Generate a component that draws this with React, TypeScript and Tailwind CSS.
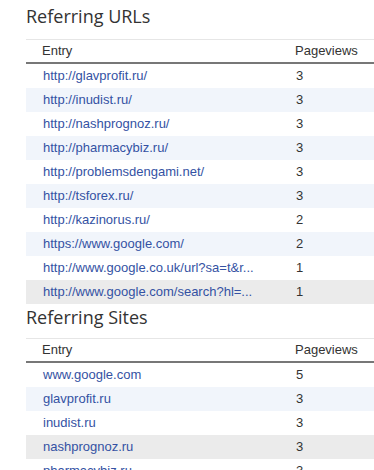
import React from 'react';

type Row = { entry: string; views: number; shade?: 'blue' | 'gray' };

const urls: Row[] = [
  { entry: 'http://glavprofit.ru/', views: 3 },
  { entry: 'http://inudist.ru/', views: 3, shade: 'blue' },
  { entry: 'http://nashprognoz.ru/', views: 3 },
  { entry: 'http://pharmacybiz.ru/', views: 3, shade: 'blue' },
  { entry: 'http://problemsdengami.net/', views: 3 },
  { entry: 'http://tsforex.ru/', views: 3, shade: 'blue' },
  { entry: 'http://kazinorus.ru/', views: 2 },
  { entry: 'https://www.google.com/', views: 2, shade: 'blue' },
  { entry: 'http://www.google.co.uk/url?sa=t&r...', views: 1 },
  { entry: 'http://www.google.com/search?hl=...', views: 1, shade: 'gray' },
];

const sites: Row[] = [
  { entry: 'www.google.com', views: 5 },
  { entry: 'glavprofit.ru', views: 3, shade: 'blue' },
  { entry: 'inudist.ru', views: 3 },
  { entry: 'nashprognoz.ru', views: 3, shade: 'gray' },
  { entry: 'pharmacybiz.ru', views: 3 },
];

const StatsTable: React.FC<{ rows: Row[] }> = ({ rows }) => (
  <div className="ml-[26px] border-t border-[#e6e6e6] font-['Liberation_Sans',Arial,sans-serif] text-[13px]">
    <div className="flex h-6 items-center border-b-2 border-[#777777] text-[#333333]">
      <div className="w-[269px] pl-4">Entry</div>
      <div>Pageviews</div>
    </div>
    {rows.map((r) => (
      <div
        key={r.entry}
        className={
          'flex h-6 items-center ' +
          (r.shade === 'blue' ? 'bg-[#f1f5fb]' : r.shade === 'gray' ? 'bg-[#ebebeb]' : 'bg-white')
        }
      >
        <div className="w-[269px] pl-[17px] text-[#3452a3] whitespace-nowrap">{r.entry}</div>
        <div className="pl-[1px] text-[#333333]">{r.views}</div>
      </div>
    ))}
  </div>
);

export default function App() {
  return (
    <div className="h-[470px] w-[374px] overflow-hidden bg-white">
      <h2 className="ml-[26px] pt-[3px] mb-[9px] font-['Open_Sans',sans-serif] text-[18px] leading-[27px] text-[#333333]">
        Referring URLs
      </h2>
      <StatsTable rows={urls} />
      <h2 className="ml-[26px] mb-[7px] font-['Open_Sans',sans-serif] text-[18px] leading-[27px] text-[#333333]">
        Referring Sites
      </h2>
      <StatsTable rows={sites} />
    </div>
  );
}
